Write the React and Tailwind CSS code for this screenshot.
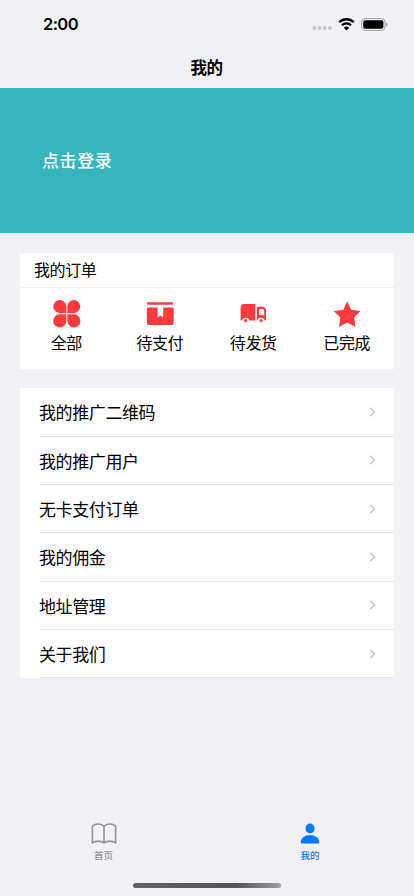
const ORDER_TABS = [
  { label: '全部', icon: CloverIcon },
  { label: '待支付', icon: BoxIcon },
  { label: '待发货', icon: TruckIcon },
  { label: '已完成', icon: StarIcon },
];

const MENU = ['我的推广二维码', '我的推广用户', '无卡支付订单', '我的佣金', '地址管理', '关于我们'];

function CloverIcon() {
  return (
    <svg className="h-7 w-7" viewBox="0 0 28 28" fill="#ff3b3d">
      <path d="M6.8 0A6.5 6.5 0 0 1 13.3 6.5V13H6.8A6.5 6.5 0 0 1 6.8 0Z" />
      <path d="M20.8 0A6.5 6.5 0 0 0 14.3 6.5V13H20.8A6.5 6.5 0 0 0 20.8 0Z" />
      <path d="M6.8 27.5A6.5 6.5 0 0 0 13.3 21V14.3H6.8A6.6 6.6 0 0 0 6.8 27.5Z" />
      <path d="M20.8 27.5A6.5 6.5 0 0 1 14.3 21V14.3H20.8A6.6 6.6 0 0 1 20.8 27.5Z" />
    </svg>
  );
}

function BoxIcon() {
  return (
    <svg className="h-7 w-7" viewBox="0 0 28 28" fill="#ff3b3d">
      <rect x="1" y="2.3" width="26" height="2.5" rx="0.7" />
      <path d="M2.8 7.5H11.6V17.6L14.4 15.5L17.2 17.6V7.5H25.7A2 2 0 0 1 27.7 9.5V22.5A2.6 2.6 0 0 1 25.1 25.1H3.4A2.6 2.6 0 0 1 .8 22.5V9.5A2 2 0 0 1 2.8 7.5Z" />
    </svg>
  );
}

function TruckIcon() {
  return (
    <svg className="h-7 w-7" viewBox="0 0 28 28" fill="#ff3b3d">
      <path d="M4.3 4H15.2V20.4H9.5A4 4 0 0 0 1.9 20.4H.6V7.7A3.7 3.7 0 0 1 4.3 4Z" />
      <path fillRule="evenodd" d="M16.8 6.8H22A4 4 0 0 1 26 10.8V20.4H24.9A4 4 0 0 0 17.3 20.4H16.8ZM19.2 9.1V15.3H24.2V11.3A2.2 2.2 0 0 0 22 9.1Z" />
      <circle cx="5.7" cy="20.6" r="1.6" />
      <circle cx="21.1" cy="20.6" r="1.6" />
    </svg>
  );
}

function StarIcon() {
  return (
    <svg className="h-7 w-7" viewBox="0 0 28 28" fill="#ff3b3d">
      <path d="M14.2 1.2L18 9.8L27.6 11.1L21 17.6L22.4 26.9L14.2 22.5L5.9 26.9L7.4 17.6L.8 11.1L10.3 9.8Z" />
    </svg>
  );
}

function StatusBar() {
  return (
    <div className="flex h-12 items-center justify-between pr-[26px] pl-[43px]">
      <span className="font-['Inter','Liberation_Sans',sans-serif] text-[16.5px] leading-none font-semibold tracking-[-0.6px] text-black">2:00</span>
      <div className="flex items-center">
        <svg className="mt-2 mr-1.5 h-1 w-5" viewBox="0 0 20 4" fill="#c4c3c9">
          <circle cx="2.3" cy="2" r="1.9" />
          <circle cx="7.5" cy="2" r="1.9" />
          <circle cx="12.7" cy="2" r="1.9" />
          <circle cx="17.9" cy="2" r="1.9" />
        </svg>
        <svg className="mr-1.5 h-[13px] w-[17px]" viewBox="0 0 17 13" fill="none" stroke="#000" strokeWidth="2.3">
          <path d="M1.2 4.3A10.3 10.3 0 0 1 15.8 4.3" />
          <path d="M3.9 7.3A6.5 6.5 0 0 1 13.1 7.3" />
          <path d="M8.5 12.5L5.8 9.8A3.8 3.8 0 0 1 11.2 9.8Z" fill="#000" stroke="none" />
        </svg>
        <svg className="h-[13px] w-[27px]" viewBox="0 0 27 13">
          <rect x=".6" y=".6" width="23.4" height="11.8" rx="3.6" fill="none" stroke="#a1a0a4" />
          <rect x="2.2" y="2.2" width="20.2" height="8.6" rx="2" fill="#000" />
          <path d="M25.2 4.5C27 5.2 27 7.8 25.2 8.5Z" fill="#96959a" />
        </svg>
      </div>
    </div>
  );
}

export default function App() {
  return (
    <div className="flex h-[896px] w-[414px] flex-col overflow-hidden bg-[#f2f1f6] font-['Noto_Sans_CJK_SC',sans-serif] text-black">
      <StatusBar />
      <header className="flex h-10 items-center justify-center pr-px pb-[3px] text-[16.5px] leading-6 font-bold tracking-[-0.4px]">我的</header>

      <section className="flex h-[145px] items-center bg-[#37b4bc] pb-px pl-[42px] text-[17px] font-medium tracking-[0.6px] text-white">
        点击登录
      </section>

      <section className="mx-5 mt-5 h-[116px] shrink-0 bg-white">
        <h2 className="flex h-[35px] items-center border-b border-[#efeff0] pb-0.5 pl-3.5 text-[16px] tracking-[-0.4px]">我的订单</h2>
        <div className="grid grid-cols-4 pt-3">
          {ORDER_TABS.map(({ label, icon: Icon }) => (
            <div key={label} className="flex flex-col items-center">
              <Icon />
              <span className="mt-0.5 pr-px text-[16px] leading-6 tracking-[-0.4px]">{label}</span>
            </div>
          ))}
        </div>
      </section>

      <ul className="mx-5 mt-[19px] shrink-0 bg-white pt-[0.5px]">
        {MENU.map((label) => (
          <li key={label} className="pl-[19px]">
            <div className="flex h-[48.3px] items-center justify-between border-b border-[#e6e6e8] pr-[18px] text-[17px] tracking-[-0.4px]">
              {label}
              <svg className="h-[10px] w-[7px]" viewBox="0 0 7 10" fill="none" stroke="#c4c4c6" strokeWidth="1.3">
                <path d="M1.2 .8L5.4 5L1.2 9.2" />
              </svg>
            </div>
          </li>
        ))}
      </ul>

      <nav className="mt-auto grid h-[63px] shrink-0 grid-cols-2 text-[9.5px] leading-[14px] font-medium">
        <div className="flex flex-col items-center text-[#949398]">
          <svg className="h-[27px] w-[26px]" viewBox="0 0 26 27" fill="none" stroke="currentColor" strokeWidth="1.6" strokeLinejoin="round">
            <path d="M13 6.3C10.5 3.4 4.6 3.2 1.4 6.1V23C4.6 20.4 10.5 20.6 13 23C15.5 20.6 21.4 20.4 24.6 23V6.1C21.4 3.2 15.5 3.4 13 6.3ZM13 6.3V23" />
          </svg>
          <span className="mt-px">首页</span>
        </div>
        <div className="flex flex-col items-center pr-px text-[#007aff]">
          <svg className="h-[27px] w-[26px]" viewBox="0 0 26 27" fill="currentColor">
            <ellipse cx="13" cy="8.5" rx="4.5" ry="4.9" />
            <path d="M3.7 22C3.7 18.6 7.7 15.1 13 15.1S22.3 18.6 22.3 22C22.3 23.1 21.6 23.6 20.5 23.6H5.5C4.4 23.6 3.7 23.1 3.7 22Z" />
          </svg>
          <span className="mt-px">我的</span>
        </div>
      </nav>
      <div className="mb-2 flex h-[5px] shrink-0 justify-center">
        <div className="h-[5px] w-[148px] rounded-full bg-linear-to-r from-[#626164] via-[#555456] via-70% to-[#a09fa3]" />
      </div>
    </div>
  );
}
